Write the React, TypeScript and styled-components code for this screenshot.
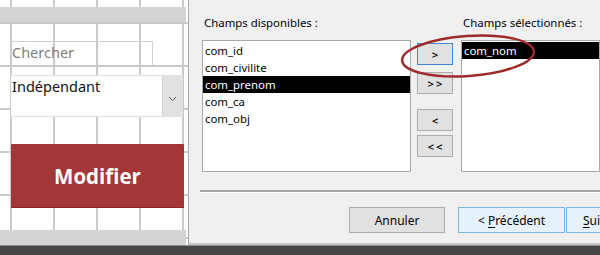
import React from "react";
import styled, { createGlobalStyle } from "styled-components";

const Global = createGlobalStyle`
  html, body { margin: 0; padding: 0; background: #ffffff; }
  body { width: 600px; height: 255px; overflow: hidden; }
`;

const Screen = styled.div`
  width: 600px;
  height: 255px;
  display: flex;
  flex-direction: column;
  overflow: hidden;
`;

const Main = styled.div`
  display: flex;
  height: 245px;
`;

const DarkBar = styled.div`
  height: 10px;
  background: #464646;
  border-top: 1px solid #8c8c8c;
  box-sizing: border-box;
`;

/* ---------- Left: form design canvas ---------- */

const FormPane = styled.div`
  width: 188px;
  flex: none;
  display: flex;
  flex-direction: column;
  background-color: #ffffff;
  background-image: linear-gradient(to right, #cacaca 2px, transparent 2px),
    linear-gradient(to bottom, #cacaca 2px, transparent 2px);
  background-size: 43px 43px;
  background-position: 10px 22px;
  font-family: "Noto Sans", "Open Sans", sans-serif;
`;

const Band = styled.div<{ $top?: number }>`
  height: 15px;
  width: 186px;
  margin-top: ${(p) => p.$top ?? 0}px;
  background: #d4d4d4;
  flex: none;
`;

const FormBody = styled.div`
  flex: 1;
  display: flex;
  flex-direction: column;
  padding-left: 11px;
`;

const SearchBox = styled.div`
  margin-top: 19px;
  width: 142px;
  height: 25px;
  box-sizing: border-box;
  border-top: 1px solid #d0d0d0;
  border-right: 1px solid #d0d0d0;
  font-size: 14.5px;
  color: #7f7f7f;
  line-height: 20px;
  padding-left: 1px;
`;

const Combo = styled.div`
  margin-top: 9px;
  width: 172px;
  height: 42px;
  box-sizing: border-box;
  display: flex;
  background: #ffffff;
  border: 1px solid #e2e2e2;
  border-left: none;
`;

const ComboText = styled.div`
  flex: 1;
  font-size: 14.5px;
  color: #111111;
  line-height: 20px;
  padding: 0 0 0 1px;
`;

const ComboArrow = styled.div`
  width: 20px;
  background: #e1e1e1;
  border-left: 1px solid #d2d2d2;
  display: flex;
  align-items: center;
  justify-content: center;
  padding-top: 6px;
  box-sizing: border-box;
`;

const RedButton = styled.div`
  margin-top: 27px;
  width: 173px;
  height: 64px;
  box-sizing: border-box;
  background: #a33636;
  border-bottom: 1px solid #8c2020;
  border-radius: 1px;
  color: #ffffff;
  font-family: "Open Sans", "Noto Sans", sans-serif;
  font-weight: 700;
  font-size: 20.5px;
  display: flex;
  align-items: center;
  justify-content: center;
  padding-top: 1px;
`;

const Spacer = styled.div`
  flex: 1;
`;

/* ---------- Right: dialog ---------- */

const Dialog = styled.div`
  position: relative;
  flex: 1;
  background: #f0f0f0;
  border-left: 1px solid #a8a8a8;
  border-bottom: 2px solid #c4c4c4;
  box-sizing: border-box;
  overflow: hidden;
  padding: 16px 0 0 13px;
  font-family: "Noto Sans", "Open Sans", sans-serif;
  font-size: 11.4px;
  color: #000000;
`;

const Columns = styled.div`
  display: flex;
  align-items: flex-start;
`;

const FieldColumn = styled.div<{ $width?: number; $gap?: number }>`
  display: flex;
  flex-direction: column;
  width: ${(p) => (p.$width ? `${p.$width}px` : "auto")};
  flex: ${(p) => (p.$width ? "none" : "1")};
  margin-left: ${(p) => p.$gap ?? 0}px;
`;

const Label = styled.div`
  height: 24px;
  line-height: 14px;
  padding-left: 2px;
  white-space: nowrap;
`;

const ListBox = styled.div`
  height: 132px;
  box-sizing: border-box;
  background: #ffffff;
  border: 1px solid #a9a9a9;
  padding-top: 1px;
`;

const Item = styled.div<{ $selected?: boolean }>`
  height: 17px;
  line-height: 17px;
  padding-left: 2px;
  white-space: nowrap;
  background: ${(p) => (p.$selected ? "#000000" : "transparent")};
  color: ${(p) => (p.$selected ? "#ffffff" : "#000000")};
`;

const MoveColumn = styled.div`
  width: 36px;
  margin-left: 6px;
  padding-top: 27px;
  display: flex;
  flex-direction: column;
  flex: none;
`;

const MoveButton = styled.div<{ $gap: number; $focused?: boolean }>`
  margin-top: ${(p) => p.$gap}px;
  height: 22px;
  box-sizing: border-box;
  background: #e1e1e1;
  border: 1px solid ${(p) => (p.$focused ? "#3f86d6" : "#adadad")};
  display: flex;
  align-items: center;
  justify-content: center;
  font-size: 11.5px;
  font-weight: 600;
  letter-spacing: 2px;
  padding-left: 2px;
`;

const Separator = styled.div`
  margin-top: 18px;
  margin-left: -2px;
  height: 2px;
  background: #a4a4a4;
  border-bottom: 1px solid #ffffff;
`;

const Footer = styled.div`
  display: flex;
  margin-top: 14px;
  padding-left: 147px;
`;

const DialogButton = styled.div<{ $width: number; $gap: number; $primary?: boolean; $inset?: number }>`
  width: ${(p) => p.$width}px;
  flex: none;
  height: 26px;
  margin-left: ${(p) => p.$gap}px;
  box-sizing: border-box;
  background: ${(p) => (p.$primary ? "#e5f1fb" : "#e1e1e1")};
  border: 1px solid ${(p) => (p.$primary ? "#7fb5e8" : "#adadad")};
  display: flex;
  align-items: center;
  justify-content: ${(p) => (p.$inset !== undefined ? "flex-start" : "center")};
  padding-left: ${(p) => p.$inset ?? 0}px;
  font-size: 12px;
  white-space: nowrap;
`;

const Key = styled.span`
  text-decoration: underline;
  text-underline-offset: 2px;
`;

const Highlight = styled.svg`
  position: absolute;
  left: 205px;
  top: 30px;
  overflow: visible;
  pointer-events: none;
`;

const Chevron = () => (
  <svg width="9" height="6" viewBox="0 0 9 6">
    <path d="M1 1 L4.5 4.5 L8 1" fill="none" stroke="#555" strokeWidth="1" />
  </svg>
);

const available = ["com_id", "com_civilite", "com_prenom", "com_ca", "com_obj"];

export default function App() {
  return (
    <Screen>
      <Global />
      <Main>
        <FormPane>
          <Band $top={7} />
          <FormBody>
            <SearchBox>Chercher</SearchBox>
            <Combo>
              <ComboText>Indépendant</ComboText>
              <ComboArrow>
                <Chevron />
              </ComboArrow>
            </Combo>
            <RedButton>Modifier</RedButton>
            <Spacer />
          </FormBody>
          <Band />
        </FormPane>

        <Dialog>
          <Columns>
            <FieldColumn $width={209}>
              <Label>Champs disponibles :</Label>
              <ListBox>
                {available.map((f) => (
                  <Item key={f} $selected={f === "com_prenom"}>
                    {f}
                  </Item>
                ))}
              </ListBox>
            </FieldColumn>
            <MoveColumn>
              <MoveButton $gap={0} $focused>&gt;</MoveButton>
              <MoveButton $gap={7}>&gt;&gt;</MoveButton>
              <MoveButton $gap={15}>&lt;</MoveButton>
              <MoveButton $gap={4}>&lt;&lt;</MoveButton>
            </MoveColumn>
            <FieldColumn $gap={8}>
              <Label>Champs sélectionnés :</Label>
              <ListBox>
                <Item $selected>com_nom</Item>
              </ListBox>
            </FieldColumn>
          </Columns>
          <Separator />
          <Footer>
            <DialogButton $width={96} $gap={0}>Annuler</DialogButton>
            <DialogButton $width={107} $gap={13} $primary>
              &lt;&nbsp;<Key>P</Key>récédent
            </DialogButton>
            <DialogButton $width={107} $gap={1} $primary $inset={16}>
              <Key>S</Key>uivant &gt;
            </DialogButton>
          </Footer>
          <Highlight width="150" height="50" viewBox="0 0 150 50">
            <ellipse
              cx="74"
              cy="26"
              rx="66"
              ry="20"
              transform="rotate(-4 74 26)"
              fill="none"
              stroke="#9e2b2b"
              strokeWidth="2.5"
            />
          </Highlight>
        </Dialog>
      </Main>
      <DarkBar />
    </Screen>
  );
}
